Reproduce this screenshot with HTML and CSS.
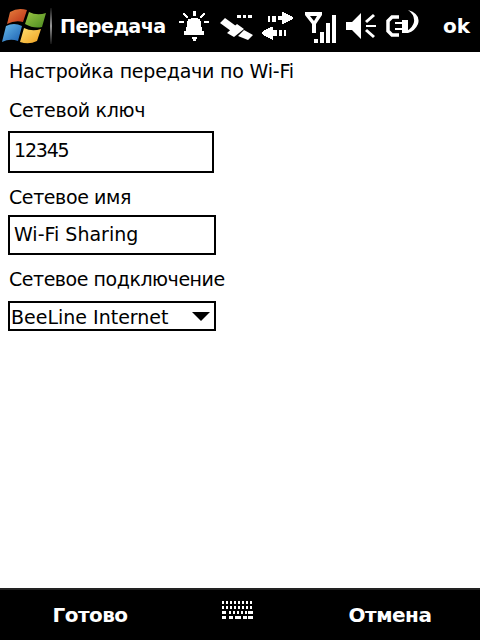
FILE: index.html
```html
<!DOCTYPE html>
<html lang="ru">
<head>
  <meta charset="UTF-8">
  <title>Передача</title>
  <link rel="stylesheet" href="styles.css">
</head>
<body>
  <header class="top-bar">
    <svg class="start-logo" width="48" height="52" viewBox="0 0 48 52">
      <defs>
        <linearGradient id="red" x1="0" y1="0" x2="1" y2="1"><stop offset="0" stop-color="#e8823e"/><stop offset="1" stop-color="#b82c16"/></linearGradient>
        <linearGradient id="green" x1="0" y1="0" x2="1" y2="1"><stop offset="0" stop-color="#9cc644"/><stop offset="1" stop-color="#4a8a20"/></linearGradient>
        <linearGradient id="blue" x1="0" y1="0" x2="1" y2="1"><stop offset="0" stop-color="#68bcec"/><stop offset="1" stop-color="#1a5eb0"/></linearGradient>
        <linearGradient id="yellow" x1="0" y1="0" x2="1" y2="1"><stop offset="0" stop-color="#ffe070"/><stop offset="1" stop-color="#f0a020"/></linearGradient>
      </defs>
      <path d="M10 12 Q18 7 27 10 L23 22 Q15 20 7 24 Z" fill="url(#red)"/>
      <path d="M29 12 Q37 16 46 13 L42 27 Q34 29 25 24 Z" fill="url(#green)"/>
      <path d="M6 26 Q14 22 22 26 L18 41 Q10 38 2 42 Z" fill="url(#blue)"/>
      <path d="M24 28 Q32 32 41 29 L37 41 Q29 45 20 42 Z" fill="url(#yellow)"/>
    </svg>
    <div class="divider"></div>
    <div class="title">Передача</div>
    <div class="status-icons">
      <svg width="32" height="52" viewBox="178 0 32 52" shape-rendering="crispEdges" fill="#fff">
        <path d="M193 11h3v5h-3z M179 21h5v2h-5z M204 21h5v2h-5z M183 13h2v1h1v1h1v1h1v2h-2v-1h-1v-1h-1v-1h-1z M205 13h-2v1h-1v1h-1v1h-1v2h2v-1h1v-1h1v-1h1z"/>
        <path d="M191 18h7v1h2v2h1v6h1v4h2v4h-20v-4h2v-4h1v-6h1v-2h2z M192 37h5v2h-1v2h-3v-2h-1z"/>
      </svg>
      <svg width="34" height="52" viewBox="219 0 34 52" fill="#fff">
        <path d="M237 15h4v3h-4z M243 15h3v3h-3z M248 15h4v3h-4z"/>
        <path d="M220 23l5-5 11 8-5 5z M227 33l10-9 7 5-10 8z M238 36l6-6 9 5-5 5z"/>
      </svg>
      <svg width="33" height="52" viewBox="262 0 33 52" shape-rendering="crispEdges" fill="#fff">
        <path d="M268 16h2v6h-2z M272 16h4v6h-4z M278 16h4v-4h2v1h2v1h2v1h2v1h2v1h1v2h-1v1h-2v1h-2v1h-2v1h-2v1h-2v-4h-4z"/>
        <path d="M272 27h-2v1h-2v1h-2v1h-2v1h-1v1h-1v2h1v1h1v1h2v1h2v1h2v1h2v1h1v-4h4v-6h-4v-4z M279 30h3v6h-3z M284 30h2v6h-2z"/>
      </svg>
      <svg width="33" height="52" viewBox="304 0 33 52" fill="#fff">
        <path fill-rule="evenodd" d="M305 12h17v3l-6 9v9h-4v-9l-7-9z M310 16l4 5 3-5z"/>
        <path d="M314 39h4v4h-4z M320 32h4v11h-4z M326 23h4v20h-4z M332 15h4v28h-4z" shape-rendering="crispEdges"/>
      </svg>
      <svg width="31" height="52" viewBox="346 0 31 52" fill="#fff">
        <path d="M346 22h6l9-9v26l-9-9h-6z"/>
        <path d="M366 25h10v2h-10z"/>
        <path d="M365 21l8-7 2 2-8 7z M365 31l8 7 2-2-8-7z"/>
      </svg>
      <svg width="33" height="52" viewBox="386 0 33 52" fill="#fff">
        <path d="M399 17h-7l-4 4v10l4 4h7" fill="none" stroke="#fff" stroke-width="3.5"/>
        <path d="M395 22h7v-2h6v13h-6v-3h-7v-2h7v-4h-7z"/>
        <path d="M408 10Q421 14 418 24Q415 31 408 33L407 31Q413 27 414 22Q415 15 408 10z"/>
      </svg>
    </div>
    <div class="ok">ok</div>
  </header>

  <main class="form">
    <div class="heading">Настройка передачи по Wi-Fi</div>

    <label class="field-label key-label">Сетевой ключ</label>
    <div class="text-box key-box">12345</div>

    <label class="field-label name-label">Сетевое имя</label>
    <div class="text-box name-box">Wi-Fi Sharing</div>

    <label class="field-label link-label">Сетевое подключение</label>
    <div class="combo-box">
      <span>BeeLine Internet</span>
      <span class="arrow"></span>
    </div>
  </main>

  <footer class="bottom-bar">
    <div class="soft-key">Готово</div>
    <svg class="keyboard" width="31" height="18" viewBox="0 0 31 18" shape-rendering="crispEdges" fill="#fff">
      <path d="M0 0h2v3h-2z M4 0h2v3h-2z M8 0h2v3h-2z M12 0h2v3h-2z M16 0h2v3h-2z M20 0h2v3h-2z M24 0h2v3h-2z M28 0h2v3h-2z"/>
      <path d="M0 5h2v3h-2z M4 5h2v3h-2z M8 5h2v3h-2z M12 5h2v3h-2z M16 5h2v3h-2z M20 5h2v3h-2z M24 5h2v3h-2z M28 5h2v3h-2z"/>
      <path d="M0 10h4v3h-4z M7 10h2v3h-2z M11 10h2v3h-2z M15 10h2v3h-2z M19 10h2v3h-2z M23 10h2v3h-2z M26 10h5v3h-5z"/>
      <path d="M0 15h4v3h-4z M7 15h4v3h-4z M13 15h6v3h-6z M21 15h4v3h-4z M26 15h5v3h-5z"/>
    </svg>
    <div class="soft-key">Отмена</div>
  </footer>
</body>
</html>
```

FILE: styles.css
```css
html, body {
  height: 100%;
}
body {
  margin: 0;
  background: #fff;
  color: #000;
  font-family: "DejaVu Sans", sans-serif;
  display: flex;
  flex-direction: column;
  overflow: hidden;
}
.top-bar {
  height: 52px;
  background: #000;
  color: #fff;
  display: flex;
  align-items: center;
  flex-shrink: 0;
}
.start-logo {
  flex-shrink: 0;
}
.divider {
  width: 2px;
  height: 36px;
  margin-left: 2px;
  background: linear-gradient(#111, #999 50%, #111);
}
.title {
  margin-left: 8px;
  width: 118px;
  font-size: 19.2px;
  font-weight: bold;
  letter-spacing: -0.6px;
  white-space: nowrap;
}
.status-icons {
  display: flex;
  gap: 9px;
}
.ok {
  margin-left: 24px;
  font-size: 20px;
  font-weight: bold;
}
.form {
  flex: 1;
  padding: 8px 8px 0;
  font-size: 19px;
  letter-spacing: -0.3px;
}
.heading {
  margin-left: 1px;
  letter-spacing: -0.2px;
  line-height: 22px;
}
.field-label {
  display: block;
  margin-left: 1px;
  line-height: 22px;
}
.key-label {
  margin-top: 17px;
  margin-bottom: 10px;
}
.name-label {
  margin-top: 13px;
  margin-bottom: 7px;
  letter-spacing: -0.4px;
}
.link-label {
  margin-top: 13px;
  margin-bottom: 11px;
  letter-spacing: -0.46px;
}
.text-box {
  box-sizing: border-box;
  border: 2px solid #000;
  padding-left: 4px;
  letter-spacing: 0;
  display: flex;
  align-items: center;
}
.key-box {
  width: 206px;
  height: 42px;
  padding-bottom: 4px;
  letter-spacing: -1.2px;
}
.name-box {
  width: 208px;
  height: 40px;
  padding-bottom: 2px;
}
.combo-box {
  box-sizing: border-box;
  width: 208px;
  height: 30px;
  border: 2px solid #000;
  padding: 1px 4px 0 1px;
  letter-spacing: 0;
  display: flex;
  align-items: center;
  justify-content: space-between;
}
.arrow {
  width: 0;
  height: 0;
  border-left: 9px solid transparent;
  border-right: 9px solid transparent;
  border-top: 9px solid #000;
}
.bottom-bar {
  box-sizing: border-box;
  height: 52px;
  flex-shrink: 0;
  background: #000;
  border-top: 2px solid #222;
  color: #fff;
  display: flex;
  align-items: center;
  justify-content: space-between;
}
.soft-key {
  width: 180px;
  text-align: center;
  font-size: 20px;
  font-weight: bold;
  letter-spacing: -0.5px;
}
.keyboard {
  margin-right: 6px;
  margin-bottom: 10px;
}
```
